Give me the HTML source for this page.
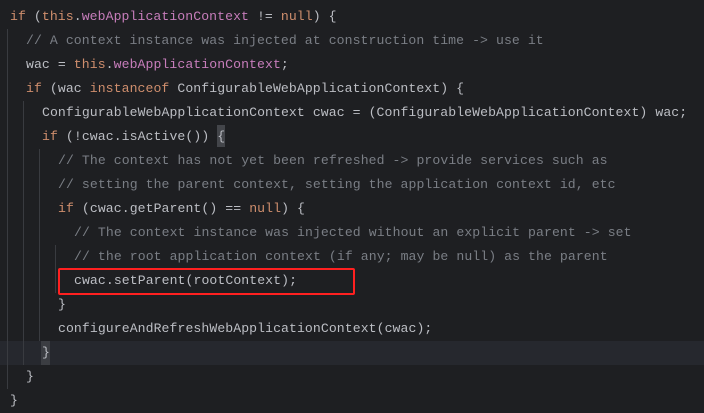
<!DOCTYPE html><html><head><style>
body{margin:0;width:704px;height:413px;background:#1e1f22;overflow:hidden;position:relative;font-family:"Liberation Mono",monospace;font-size:13.15px;letter-spacing:0.08px;color:#bcbec4}
.l{position:absolute;height:24px;line-height:24px;white-space:pre}
.k{color:#cf8e6d}.f{color:#c77dbb}.c{color:#7a7e85}
.g{position:absolute;width:1px;background:#393b40}
</style></head><body>
<div style="position:absolute;left:0;top:341px;width:704px;height:24px;background:#26282e"></div>
<div class="g" style="left:7px;top:29px;height:360px"></div>
<div class="g" style="left:23px;top:101px;height:264px"></div>
<div class="g" style="left:39px;top:149px;height:192px"></div>
<div class="g" style="left:55px;top:245px;height:48px"></div>
<div style="position:absolute;left:41px;top:341px;width:9px;height:24px;background:#3b3d42"></div>
<div style="position:absolute;left:217px;top:125px;width:8px;height:22px;background:#43454a"></div>
<div class="l" style="left:10px;top:5px"><span class="k">if</span> (<span class="k">this</span>.<span class="f">webApplicationContext</span> != <span class="k">null</span>) {</div>
<div class="l c" style="left:26px;top:29px">// A context instance was injected at construction time -&gt; use it</div>
<div class="l" style="left:26px;top:53px">wac = <span class="k">this</span>.<span class="f">webApplicationContext</span>;</div>
<div class="l" style="left:26px;top:77px"><span class="k">if</span> (wac <span class="k">instanceof</span> ConfigurableWebApplicationContext) {</div>
<div class="l" style="left:42px;top:101px">ConfigurableWebApplicationContext cwac = (ConfigurableWebApplicationContext) wac;</div>
<div class="l" style="left:42px;top:125px"><span class="k">if</span> (!cwac.isActive()) {</div>
<div class="l c" style="left:58px;top:149px">// The context has not yet been refreshed -&gt; provide services such as</div>
<div class="l c" style="left:58px;top:173px">// setting the parent context, setting the application context id, etc</div>
<div class="l" style="left:58px;top:197px"><span class="k">if</span> (cwac.getParent() == <span class="k">null</span>) {</div>
<div class="l c" style="left:74px;top:221px">// The context instance was injected without an explicit parent -&gt; set</div>
<div class="l c" style="left:74px;top:245px">// the root application context (if any; may be null) as the parent</div>
<div class="l" style="left:74px;top:269px">cwac.setParent(rootContext);</div>
<div class="l" style="left:58px;top:293px">}</div>
<div class="l" style="left:58px;top:317px">configureAndRefreshWebApplicationContext(cwac);</div>
<div class="l" style="left:42px;top:341px">}</div>
<div class="l" style="left:26px;top:365px">}</div>
<div class="l" style="left:10px;top:389px">}</div>
<div style="position:absolute;left:58px;top:268px;width:293px;height:23px;border:2px solid #ff2020;border-radius:2px"></div>
</body></html>
